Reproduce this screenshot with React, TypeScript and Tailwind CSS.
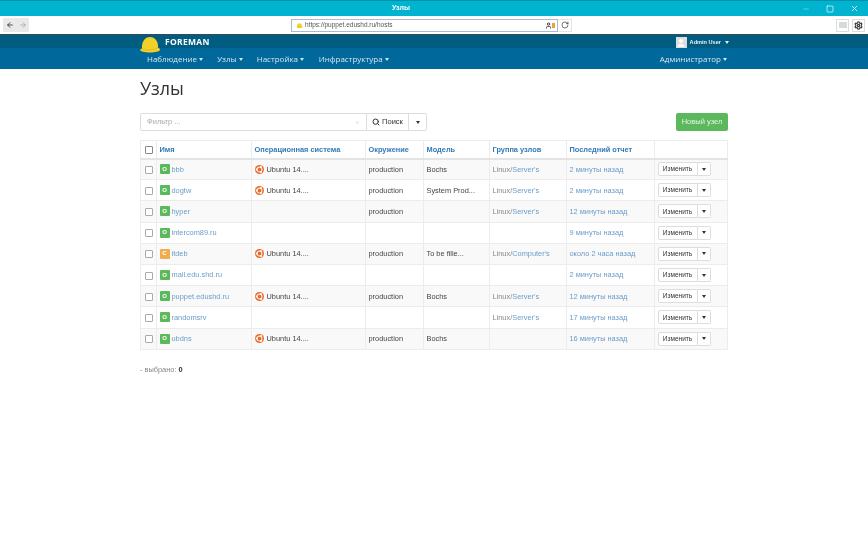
import { Search, ArrowLeft, ArrowRight, RotateCw, X, Minus, Square, Settings, User } from "lucide-react";

const Caret = ({ className = "" }: { className?: string }) => (
  <span className={`inline-block w-0 h-0 border-l-[2.5px] border-r-[2.5px] border-t-[3px] border-l-transparent border-r-transparent border-t-current align-middle ${className}`} />
);

const Ubuntu = () => (
  <svg width="9" height="9" viewBox="0 0 24 24" className="shrink-0">
    <circle cx="12" cy="12" r="12" fill="#ea6a2c" />
    <circle cx="12" cy="12" r="6.5" fill="none" stroke="#fbe3d4" strokeWidth="3" />
    <circle cx="4.5" cy="12" r="2.6" fill="#fff" />
    <circle cx="16" cy="5.2" r="2.6" fill="#fff" />
    <circle cx="16" cy="18.8" r="2.6" fill="#fff" />
  </svg>
);

const Helmet = ({ w, h }: { w: number; h: number }) => (
  <svg width={w} height={h} viewBox="0 0 40 32">
    <path d="M4 24C3 10 10 1 20 1s17 9 16 21c2 1 4 3 4 5-1 3-10 5-20 5S1 30 0 27c0-1 2-2 4-3z" fill="#f1d02a" />
    <path d="M4 25c7 3 25 3 32-3" fill="none" stroke="#dcb414" strokeWidth="1.5" />
  </svg>
);

type Row = { name: string; status: string; os: boolean; env: string; model: string; group: [string, string] | null; report: string };
const rows: Row[] = [
  { name: "bbb", status: "O", os: true, env: "production", model: "Bochs", group: ["Linux/", "Server's"], report: "2 минуты назад" },
  { name: "dogtw", status: "O", os: true, env: "production", model: "System Prod...", group: ["Linux/", "Server's"], report: "2 минуты назад" },
  { name: "hyper", status: "O", os: false, env: "production", model: "", group: ["Linux/", "Server's"], report: "12 минуты назад" },
  { name: "intercom89.ru", status: "O", os: false, env: "", model: "", group: null, report: "9 минуты назад" },
  { name: "itdeb", status: "C", os: true, env: "production", model: "To be fille...", group: ["Linux/", "Computer's"], report: "около 2 часа назад" },
  { name: "mail.edu.shd.ru", status: "O", os: false, env: "", model: "", group: null, report: "2 минуты назад" },
  { name: "puppet.edushd.ru", status: "O", os: true, env: "production", model: "Bochs", group: ["Linux/", "Server's"], report: "12 минуты назад" },
  { name: "randomsrv", status: "O", os: false, env: "", model: "", group: ["Linux/", "Server's"], report: "17 минуты назад" },
  { name: "ubdns", status: "O", os: true, env: "production", model: "Bochs", group: null, report: "16 минуты назад" },
];

const headers = ["Имя", "Операционная система", "Окружение", "Модель", "Группа узлов", "Последний отчет"];
const td = "border-l border-[#ececec] px-[2.5px] align-middle whitespace-nowrap overflow-hidden";

export default function App() {
  return (
    <div className="w-[868px] h-[543px] overflow-hidden bg-white text-[7.4px] text-[#444] font-['Liberation_Sans',sans-serif] blur-[0.3px]">
      {/* window title bar */}
      <div className="h-4 bg-[#00b4d0] border-t border-[#0090a8] flex items-center relative">
        <span className="w-[802px] text-center text-[7px] font-bold text-white">Узлы</span>
        <div className="absolute right-0 top-0 h-full flex items-center gap-[16px] pr-[9px] text-white">
          <Minus size={8} className="opacity-50" />
          <Square size={8} />
          <X size={9} />
        </div>
      </div>
      {/* browser toolbar */}
      <div className="h-[19px] bg-white flex items-center border-b border-[#3a4a55] relative">
        <div className="ml-[3px] flex h-[14px] w-[26px] bg-[#e9e9e9] rounded-[1px]">
          <span className="w-[13px] flex items-center justify-center"><ArrowLeft size={8} strokeWidth={2.5} className="text-[#333]" /></span>
          <span className="w-[13px] flex items-center justify-center"><ArrowRight size={8} className="text-[#999]" /></span>
        </div>
        <div className="ml-[262px] w-[267px] h-[13px] border border-[#a5bbd6] flex items-center pl-[4px]">
          <Helmet w={7} h={5} />
          <span className="ml-[2px] text-[6.5px] text-[#555]">https://puppet.edushd.ru/hosts</span>
          <span className="ml-auto mr-[2px] flex items-center">
            <User size={7} strokeWidth={3} className="text-[#333]" />
            <span className="w-[3px] h-[5px] bg-[#f0a030]" />
          </span>
        </div>
        <div className="w-[14px] h-[13px] flex items-center justify-center border border-[#e4e4e4] border-l-0">
          <RotateCw size={8} className="text-[#333]" />
        </div>
        <div className="ml-auto mr-[3px] flex gap-[3px]">
          <div className="w-[13px] h-[13px] border border-[#ddd] flex items-center justify-center"><span className="w-[8px] h-[6px] bg-[#d5dadd]" /></div>
          <div className="w-[13px] h-[13px] border border-[#ddd] flex items-center justify-center"><Settings size={9} className="text-[#333]" strokeWidth={3} /></div>
        </div>
      </div>
      {/* Foreman top bar */}
      <div className="h-[13px] bg-[#005c80] relative">
        <div className="w-[588px] mx-auto flex items-center h-full justify-between pt-[1px]">
          <span className="ml-[25px] text-[8.5px] font-bold tracking-[0.3px] text-white font-['Open_Sans',sans-serif]">FOREMAN</span>
          <span className="flex items-center -mr-[1px] text-[5.6px] font-bold text-[#e8f0f5]">
            <span className="w-[11px] h-[11px] bg-[#ddd] mr-[3px] flex items-end justify-center overflow-hidden"><User size={10} fill="#fff" className="text-white" /></span>
            Admin User
            <Caret className="ml-[4px]" />
          </span>
        </div>
        <span className="absolute left-[140px] top-[1px] z-10"><Helmet w={20} h={17} /></span>
      </div>
      {/* Foreman nav */}
      <div className="h-[21px] bg-[#00689b] text-[#d5e6ef] text-[8px] font-['Open_Sans',sans-serif]">
        <div className="w-[588px] mx-auto h-full flex items-center pl-[7px] pr-[1px] pt-[1px]">
          <span>Наблюдение <Caret /></span>
          <span className="ml-[14px]">Узлы <Caret /></span>
          <span className="ml-[14px]">Настройка <Caret /></span>
          <span className="ml-[14.5px]">Инфраструктура <Caret /></span>
          <span className="ml-auto">Администратор <Caret /></span>
        </div>
      </div>
      {/* content */}
      <div className="w-[588px] mx-auto">
        <h1 className="mt-[8px] h-[23px] text-[18px] leading-[23px] text-[#333] font-['Open_Sans',sans-serif]">Узлы</h1>
        <div className="mt-[13px] flex items-center justify-between">
          <div className="flex h-[18px]">
            <div className="w-[227px] border border-[#ddd] rounded-l-[2px] flex items-center px-[6px] text-[7.5px] text-[#aaa]">
              Фильтр ...
              <X size={5} className="ml-auto text-[#bbb]" />
            </div>
            <div className="w-[42px] border border-l-0 border-[#ddd] flex items-center justify-center gap-[2px] text-[7.5px] text-[#333]">
              <Search size={8} strokeWidth={3} />Поиск
            </div>
            <div className="w-[18px] border border-l-0 border-[#ddd] rounded-r-[2px] flex items-center justify-center text-[#333]"><Caret /></div>
          </div>
          <div className="w-[52px] h-[18px] bg-[#5cb85c] rounded-[2px] flex items-center justify-center text-[7.5px] text-[#e6f5e6]">Новый узел</div>
        </div>
        <table className="mt-[9px] w-[588px] table-fixed border-collapse border border-[#ececec]">
          <colgroup>
            <col className="w-[16px]" />
            <col className="w-[95px]" />
            <col className="w-[114px]" />
            <col className="w-[58px]" />
            <col className="w-[66px]" />
            <col className="w-[77px]" />
            <col className="w-[88px]" />
            <col />
          </colgroup>
          <thead>
            <tr className="h-[18px] border-b-2 border-[#e4e4e4] text-[#337ab7] font-bold text-left">
              <th className="text-center"><span className="inline-block w-[8px] h-[8px] border border-[#888] rounded-[1px] align-middle" /></th>
              {headers.map((h) => (
                <th key={h} className={td + " font-bold"}>{h}</th>
              ))}
              <th className={td} />
            </tr>
          </thead>
          <tbody>
            {rows.map((r, i) => (
              <tr key={r.name} className={`h-[21.2px] border-b border-[#ececec] ${i % 2 === 0 ? "bg-[#f9f9f9]" : "bg-white"}`}>
                <td className="text-center"><span className="inline-block w-[8px] h-[8px] border border-[#aaa] rounded-[1px] align-middle bg-white" /></td>
                <td className={td}>
                  <span className="flex items-center">
                    <span className={`w-[10px] h-[10px] rounded-[1px] text-[6px] font-bold text-white flex items-center justify-center ${r.status === "O" ? "bg-[#5cb85c]" : "bg-[#f0ad4e]"}`}>{r.status}</span>
                    <span className="ml-[2px] text-[#6a9dc9]">{r.name}</span>
                  </span>
                </td>
                <td className={td}>
                  {r.os && <span className="flex items-center gap-[3px]"><Ubuntu /><span>Ubuntu 14....</span></span>}
                </td>
                <td className={td}>{r.env}</td>
                <td className={td}>{r.model}</td>
                <td className={td}>
                  {r.group && <span><span className="text-[#888]">{r.group[0]}</span><span className="text-[#6a9dc9]">{r.group[1]}</span></span>}
                </td>
                <td className={td + " text-[#6a9dc9]"}>{r.report}</td>
                <td className={td}>
                  <span className="flex h-[14px] w-[53px] text-[6.5px] text-[#333]">
                    <span className="w-[40px] border border-[#ddd] rounded-l-[2px] flex items-center justify-center bg-white">Изменить</span>
                    <span className="w-[13px] border border-l-0 border-[#ddd] rounded-r-[2px] flex items-center justify-center bg-white"><Caret /></span>
                  </span>
                </td>
              </tr>
            ))}
          </tbody>
        </table>
        <div className="mt-[14px] text-[#888]">- выбрано: <b className="text-[#333]">0</b></div>
      </div>
    </div>
  );
}
